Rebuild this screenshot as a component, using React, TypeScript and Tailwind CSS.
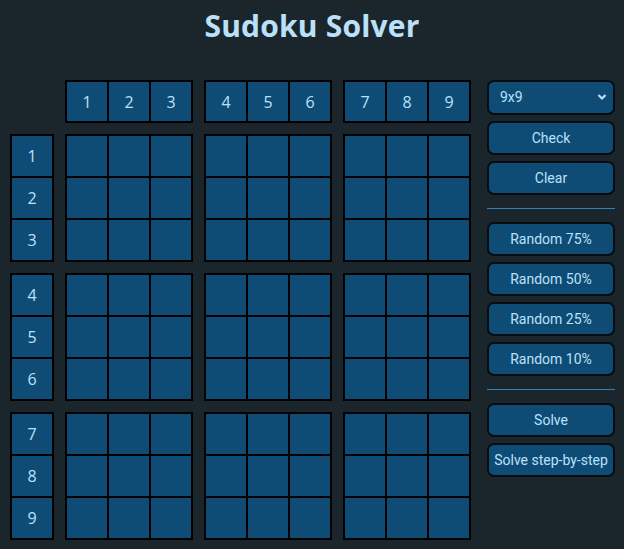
import React from "react";

const digits = [1, 2, 3, 4, 5, 6, 7, 8, 9];
const bands = [0, 1, 2];

function Cell({ label, tall = true }: { label?: number; tall?: boolean }) {
  return (
    <div
      className={`flex items-center justify-center bg-[#0f4c75] text-[16px] text-[#bbe1fa] ${
        tall ? "h-[40px]" : "h-[39px]"
      }`}
    >
      {label}
    </div>
  );
}

function Block({ labels, cols, rows }: { labels?: number[]; cols: number; rows: number }) {
  const count = cols * rows;
  return (
    <div
      className={`grid gap-[2px] bg-black p-[2px] ${cols === 3 ? "grid-cols-[40px_40px_40px]" : "grid-cols-[40px]"}`}
    >
      {Array.from({ length: count }).map((_, i) => (
        <Cell key={i} label={labels ? labels[i] : undefined} tall={rows !== 1} />
      ))}
    </div>
  );
}

function Btn({ children }: { children: React.ReactNode }) {
  return (
    <button className="h-[34px] w-full rounded-[7px] border-2 border-[#080c0f] bg-[#0f4c75] text-[14px] text-[#bbe1fa]">
      {children}
    </button>
  );
}

export default function App() {
  return (
    <div className="min-h-screen bg-[#1b262c] font-['Open_Sans',sans-serif]">
      <h1 className="pt-[6px] text-center text-[30px] font-bold leading-[40px] tracking-[0.2px] text-[#bbe1fa]">
        Sudoku Solver
      </h1>
      <div className="mt-[34px] flex items-start pl-[10px]">
        <div className="grid grid-cols-[44px_128px_128px_128px] gap-x-[11px] gap-y-[11px]">
          <div />
          {bands.map((b) => (
            <Block key={`h${b}`} cols={3} rows={1} labels={digits.slice(b * 3, b * 3 + 3)} />
          ))}
          {bands.map((b) => (
            <React.Fragment key={`r${b}`}>
              <Block cols={1} rows={3} labels={digits.slice(b * 3, b * 3 + 3)} />
              <Block cols={3} rows={3} />
              <Block cols={3} rows={3} />
              <Block cols={3} rows={3} />
            </React.Fragment>
          ))}
        </div>

        <div className="ml-[16px] flex w-[128px] flex-col font-['Roboto',sans-serif]">
          <div className="relative">
            <select
              defaultValue="9x9"
              className="h-[35px] w-full appearance-none rounded-[7px] border-2 border-[#080c0f] bg-[#0f4c75] pl-[11px] text-[14px] text-[#bbe1fa] outline-none"
            >
              <option value="4x4">4x4</option>
              <option value="9x9">9x9</option>
              <option value="16x16">16x16</option>
            </select>
            <svg
              className="pointer-events-none absolute right-[8px] top-[13px]"
              width="10"
              height="8"
              viewBox="0 0 10 8"
              fill="none"
              stroke="#bbe1fa"
              strokeWidth="2.2"
            >
              <polyline points="1.5,2 5,5.5 8.5,2" />
            </svg>
          </div>
          <div className="mt-[6px] flex flex-col gap-[6px]">
            <Btn>Check</Btn>
            <Btn>Clear</Btn>
          </div>
          <div className="my-[13px] h-px bg-[#3282b8]" />
          <div className="flex flex-col gap-[6px]">
            <Btn>Random 75%</Btn>
            <Btn>Random 50%</Btn>
            <Btn>Random 25%</Btn>
            <Btn>Random 10%</Btn>
          </div>
          <div className="my-[13px] h-px bg-[#3282b8]" />
          <div className="flex flex-col gap-[6px]">
            <Btn>Solve</Btn>
            <Btn>Solve step-by-step</Btn>
          </div>
        </div>
      </div>
    </div>
  );
}
